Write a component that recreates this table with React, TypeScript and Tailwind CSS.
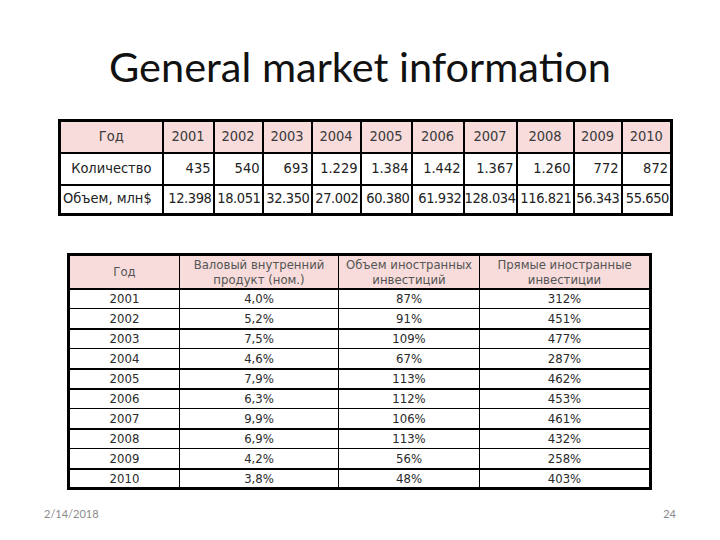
import React from "react";

const years = ["2001","2002","2003","2004","2005","2006","2007","2008","2009","2010"];
const qty = ["435","540","693","1.229","1.384","1.442","1.367","1.260","772","872"];
const vol = ["12.398","18.051","32.350","27.002","60.380","61.932","128.034","116.821","56.343","55.650"];
const t1w = ["w-[103px]","w-[51px]","w-[49px]","w-[49px]","w-[49px]","w-[51px]","w-[52px]","w-[53px]","w-[57px]","w-[48px]","w-[50px]"];

const rows2: [string,string,string,string,boolean][] = [
  ["2001","4,0%","87%","312%",false],
  ["2002","5,2%","91%","451%",true],
  ["2003","7,5%","109%","477%",false],
  ["2004","4,6%","67%","287%",true],
  ["2005","7,9%","113%","462%",true],
  ["2006","6,3%","112%","453%",false],
  ["2007","9,9%","106%","461%",true],
  ["2008","6,9%","113%","432%",false],
  ["2009","4,2%","56%","258%",true],
  ["2010","3,8%","48%","403%",true],
];

export default function App() {
  return (
    <div className="w-[720px] h-[540px] bg-white flex flex-col relative overflow-hidden">
      <div className="h-[42px]" />
      <h1 className="text-center text-[41.5px] leading-[48px] text-[#111] [font-family:Lato,sans-serif]">
        General market information
      </h1>
      <div className="h-[29px]" />
      <div className="pl-[58px]">
        <table className="w-[614px] border-collapse table-fixed border-[3px] border-black text-[14.5px] [font-family:'DejaVu_Sans_Condensed','DejaVu_Sans',sans-serif]">
          <colgroup>
            {t1w.map((w, i) => (<col key={i} className={w} />))}
          </colgroup>
          <tbody>
            <tr className="h-[32px] bg-[#f7dcdb] text-[#3a3a3a]">
              <td className="border-2 border-black text-center">Год</td>
              {years.map((y) => (<td key={y} className="border-2 border-black text-center">{y}</td>))}
            </tr>
            <tr className="h-[32px] text-[#222]">
              <td className="border-2 border-black text-center">Количество</td>
              {qty.map((v, i) => (<td key={i} className="border-2 border-black text-right pr-[2px]">{v}</td>))}
            </tr>
            <tr className="h-[30px] text-[#222]">
              <td className="border-2 border-black text-left pl-[2px] whitespace-nowrap overflow-hidden">Объем, млн$</td>
              {vol.map((v, i) => (<td key={i} className="border-2 border-black text-right pr-[1px] whitespace-nowrap overflow-hidden tracking-[-0.4px]">{v}</td>))}
            </tr>
          </tbody>
        </table>
      </div>
      <div className="h-[37px]" />
      <div className="pl-[67px]">
        <table className="w-[582px] border-collapse table-fixed border-[3px] border-black text-[13px] [font-family:'DejaVu_Sans_Condensed','DejaVu_Sans',sans-serif]">
          <colgroup>
            <col className="w-[111px]" />
            <col className="w-[159px]" />
            <col className="w-[141px]" />
            <col className="w-[171px]" />
          </colgroup>
          <tbody>
            <tr className="h-[34px] bg-[#f7dcdb] text-[#555] leading-[15px]">
              <td className="border-b-2 border-r border-black text-center">Год</td>
              <td className="border-b-2 border-r border-black text-center">Валовый внутренний<br />продукт (ном.)</td>
              <td className="border-b-2 border-r border-black text-center">Объем иностранных<br />инвестиций</td>
              <td className="border-b-2 border-black text-center">Прямые иностранные<br />инвестиции</td>
            </tr>
            {rows2.map(([y, a, b, c, thick]) => (
              <tr key={y} className="h-[20px] text-[#2a2a2a] leading-[15px]">
                <td className={`${thick ? "border-b-2" : "border-b"} border-r border-black text-center`}>{y}</td>
                <td className={`${thick ? "border-b-2" : "border-b"} border-r border-black text-center`}>{a}</td>
                <td className={`${thick ? "border-b-2" : "border-b"} border-r border-black text-center`}>{b}</td>
                <td className={`${thick ? "border-b-2" : "border-b"} border-black text-center`}>{c}</td>
              </tr>
            ))}
          </tbody>
        </table>
      </div>
      <div className="flex-1" />
      <div className="flex justify-between items-center px-[44px] pb-[18px] text-[11px] text-[#8a8a8a] [font-family:Lato,sans-serif]">
        <span>2/14/2018</span>
        <span>24</span>
      </div>
    </div>
  );
}
